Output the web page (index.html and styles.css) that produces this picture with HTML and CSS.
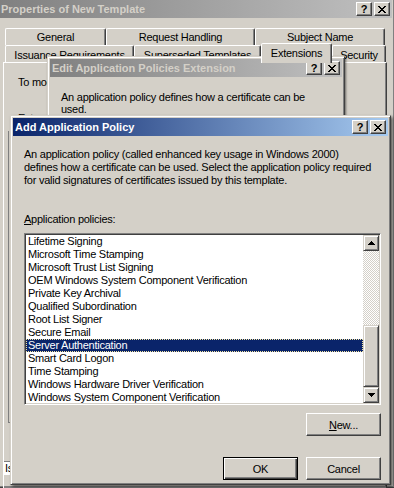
FILE: index.html
```html
<!DOCTYPE html>
<html lang="en">
<head>
    <meta charset="UTF-8">
    <meta name="viewport" content="width=device-width, initial-scale=1.0">
    <title>Add Application Policy</title>
    <link rel="stylesheet" href="styles.css">
</head>
<body>
    <!-- back window: certificate template properties -->
    <div class="window props">
        <div class="titlebar inactive">
            <span class="title">Properties of New Template</span>
            <div class="caption-btns">
                <button class="cbtn">?</button>
                <button class="cbtn"><svg width="8" height="7" viewBox="0 0 8 7"><path d="M0 0h2v1H0zM6 0h2v1H6zM1 1h2v1H1zM5 1h2v1H5zM2 2h4v1H2zM3 3h2v1H3zM2 4h4v1H2zM1 5h2v1H1zM5 5h2v1H5zM0 6h2v1H0zM6 6h2v1H6z"/></svg></button>
            </div>
        </div>
        <div class="tab-area">
            <div class="tab-row">
                <div class="tab" style="width:101px">General</div>
                <div class="tab" style="width:149px">Request Handling</div>
                <div class="tab" style="width:130px">Subject Name</div>
            </div>
            <div class="tab-row front">
                <div class="tab" style="width:129px">Issuance Requirements</div>
                <div class="tab" style="width:127px">Superseded Templates</div>
                <div class="tab selected" style="width:71px">Extensions</div>
                <div class="tab" style="width:54px">Security</div>
            </div>
        </div>
        <div class="tab-panel">
            <p class="panel-text">To modify an extension, select it, and then click Edit.</p>
            <p class="panel-text second">Extensions included in this template:</p>
            <div class="ext-list"></div>
            <div class="ext-desc">Issuance Policies</div>
        </div>
    </div>

    <!-- middle window -->
    <div class="window edit-ext">
        <div class="titlebar inactive">
            <span class="title">Edit Application Policies Extension</span>
            <div class="caption-btns">
                <button class="cbtn">?</button>
                <button class="cbtn"><svg width="8" height="7" viewBox="0 0 8 7"><path d="M0 0h2v1H0zM6 0h2v1H6zM1 1h2v1H1zM5 1h2v1H5zM2 2h4v1H2zM3 3h2v1H3zM2 4h4v1H2zM1 5h2v1H1zM5 5h2v1H5zM0 6h2v1H0zM6 6h2v1H6z"/></svg></button>
            </div>
        </div>
        <div class="edit-body">
            <p class="edit-text">An application policy defines how a certificate can be used.</p>
        </div>
    </div>

    <!-- front dialog -->
    <div class="window add-policy">
        <div class="titlebar active">
            <span class="title">Add Application Policy</span>
            <div class="caption-btns">
                <button class="cbtn">?</button>
                <button class="cbtn"><svg width="8" height="7" viewBox="0 0 8 7"><path d="M0 0h2v1H0zM6 0h2v1H6zM1 1h2v1H1zM5 1h2v1H5zM2 2h4v1H2zM3 3h2v1H3zM2 4h4v1H2zM1 5h2v1H1zM5 5h2v1H5zM0 6h2v1H0zM6 6h2v1H6z"/></svg></button>
            </div>
        </div>
        <div class="add-body">
            <p class="intro">An application policy (called enhanced key usage in Windows 2000)<br>defines how a certificate can be used. Select the application policy required<br>for valid signatures of certificates issued by this template.</p>
            <p class="field-label"><u>A</u>pplication policies:</p>
            <div class="listbox">
                <ul class="list-items">
                    <li>Lifetime Signing</li>
                    <li>Microsoft Time Stamping</li>
                    <li>Microsoft Trust List Signing</li>
                    <li>OEM Windows System Component Verification</li>
                    <li>Private Key Archival</li>
                    <li>Qualified Subordination</li>
                    <li>Root List Signer</li>
                    <li>Secure Email</li>
                    <li class="selected">Server Authentication</li>
                    <li>Smart Card Logon</li>
                    <li>Time Stamping</li>
                    <li>Windows Hardware Driver Verification</li>
                    <li>Windows System Component Verification</li>
                </ul>
                <div class="scrollbar">
                    <div class="sb-btn"><svg width="7" height="4" viewBox="0 0 7 4"><path d="M3 0h1v1H3zM2 1h3v1H2zM1 2h5v1H1zM0 3h7v1H0z"/></svg></div>
                    <div class="sb-track"></div>
                    <div class="sb-thumb"></div>
                    <div class="sb-btn"><svg width="7" height="4" viewBox="0 0 7 4"><path d="M0 0h7v1H0zM1 1h5v1H1zM2 2h3v1H2zM3 3h1v1H3z"/></svg></div>
                </div>
            </div>
            <div class="btn-row new-row">
                <button class="btn"><u>N</u>ew...</button>
            </div>
            <div class="btn-row action-row">
                <button class="btn default">OK</button>
                <button class="btn">Cancel</button>
            </div>
        </div>
    </div>
</body>
</html>
```

FILE: styles.css
```css
/* Windows 2000 dialog look */
* {
    box-sizing: border-box;
}
body {
    margin: 0;
    width: 394px;
    height: 488px;
    overflow: hidden;
    position: relative;
    background-color: #d4d0c8;
    font-family: "Liberation Sans", Arial, sans-serif;
    font-size: 11px;
    letter-spacing: -0.25px;
    color: #000;
}
p {
    margin: 0;
}
.window {
    position: absolute;
    display: flex;
    flex-direction: column;
    background-color: #d4d0c8;
    border: 1px solid;
    border-color: #d4d0c8 #404040 #404040 #d4d0c8;
    box-shadow: inset 1px 1px #fff, inset -1px -1px #808080;
    padding: 2px;
}
.props {
    left: -4px;
    top: -3px;
    width: 399px;
    height: 491px;
}
.edit-ext {
    left: 47px;
    top: 56px;
    width: 298px;
    height: 420px;
    box-shadow: inset 1px 1px #fff, inset -1px -1px #808080, 1px 1px 2px rgba(0,0,0,0.5);
}
.add-policy {
    left: 10px;
    top: 115px;
    width: 381px;
    height: 370px;
    box-shadow: inset 1px 1px #fff, inset -1px -1px #808080, 2px 2px 3px rgba(0,0,0,0.55);
}

/* title bars */
.titlebar {
    flex: none;
    height: 18px;
    display: flex;
    align-items: center;
    justify-content: space-between;
    padding: 0 2px;
    font-weight: bold;
    letter-spacing: 0;
    white-space: nowrap;
    overflow: hidden;
}
.titlebar.active {
    background: linear-gradient(to right, #0a246a, #a6caf0);
    color: #fff;
}
.titlebar.inactive {
    background: linear-gradient(to right, #808080, #c0c0c0);
    color: #d4d0c8;
}
.caption-btns {
    display: flex;
    gap: 2px;
}
.cbtn {
    width: 16px;
    height: 14px;
    padding: 0;
    display: flex;
    align-items: center;
    justify-content: center;
    background-color: #d4d0c8;
    border: 1px solid;
    border-color: #fff #404040 #404040 #fff;
    box-shadow: inset -1px -1px #808080;
    font-family: "Liberation Sans", Arial, sans-serif;
    font-size: 11px;
    font-weight: bold;
    color: #000;
    line-height: 1;
}

/* tabs */
.tab-area {
    padding: 10px 0 0 6px;
}
.tab-row {
    display: flex;
    height: 17px;
}
.tab {
    height: 17px;
    border: 1px solid;
    border-bottom: none;
    border-color: #fff #404040 transparent #fff;
    border-radius: 2px 2px 0 0;
    box-shadow: inset -1px 0 #808080;
    text-align: center;
    line-height: 17px;
    white-space: nowrap;
}
.tab-row.front .tab {
    line-height: 18px;
}
.tab-row.front .tab.selected {
    position: relative;
    z-index: 1;
    height: 20px;
    margin-top: -2px;
    line-height: 19px;
    background-color: #d4d0c8;
}
.tab-panel {
    flex: 1;
    width: 384px;
    margin-left: 4px;
    border: 1px solid;
    border-color: #fff #404040 #404040 #fff;
    box-shadow: inset -1px -1px #808080;
    padding: 13px 14px;
}
.panel-text {
    line-height: 13px;
    white-space: nowrap;
}
.panel-text.second {
    margin-top: 23px;
}
.ext-list {
    margin: 6px 0 0 -10px;
    height: 292px;
    border-left: 1px solid #808080;
    border-bottom: 1px solid #808080;
}
.ext-desc {
    margin: 38px 0 0 -14px;
    height: 14px;
    width: 200px;
    white-space: nowrap;
    background-color: #fff;
    border-top: 1px solid #808080;
    line-height: 12px;
    padding-left: 1px;
}

/* middle window */
.edit-body {
    padding: 14px 11px;
}
.edit-text {
    width: 262px;
    line-height: 12px;
}

/* front dialog */
.add-body {
    flex: 1;
    display: flex;
    flex-direction: column;
    padding: 12px 7px 2px 11px;
}
.intro {
    line-height: 13px;
    white-space: nowrap;
}
.field-label {
    margin-top: 26px;
    line-height: 13px;
}
.listbox {
    display: flex;
    height: 172px;
    margin-top: 7px;
    background-color: #fff;
    border: 1px solid;
    border-color: #808080 #fff #fff #808080;
    box-shadow: inset 1px 1px #404040, inset -1px -1px #d4d0c8;
    padding: 1px;
}
.list-items {
    flex: 1;
    list-style: none;
    margin: 0;
    padding: 0;
    overflow: hidden;
}
.list-items li {
    height: 13px;
    line-height: 13px;
    padding-left: 2px;
    white-space: nowrap;
}
.list-items li.selected {
    background-color: #0a246a;
    color: #fff;
    outline: 1px dotted #f3e4a0;
    outline-offset: -1px;
}
.scrollbar {
    width: 16px;
    display: flex;
    flex-direction: column;
}
.sb-btn, .sb-thumb {
    background-color: #d4d0c8;
    border: 1px solid;
    border-color: #d4d0c8 #404040 #404040 #d4d0c8;
    box-shadow: inset 1px 1px #fff, inset -1px -1px #808080;
}
.sb-btn {
    height: 16px;
    display: flex;
    align-items: center;
    justify-content: center;
}
.sb-track {
    flex: 1;
    background: repeating-conic-gradient(#fff 0 25%, #d4d0c8 0 50%) 0 0 / 2px 2px;
}
.sb-thumb {
    height: 62px;
}
.btn-row {
    display: flex;
    justify-content: flex-end;
    gap: 8px;
}
.new-row {
    margin-top: 8px;
}
.action-row {
    margin-top: 21px;
}
.btn {
    width: 75px;
    height: 23px;
    padding: 0;
    background-color: #d4d0c8;
    border: 1px solid;
    border-color: #fff #404040 #404040 #fff;
    box-shadow: inset -1px -1px #808080;
    font-family: "Liberation Sans", Arial, sans-serif;
    font-size: 11px;
    letter-spacing: -0.25px;
    color: #000;
}
.btn.default {
    border-color: #000;
    box-shadow: inset 1px 1px #fff, inset -1px -1px #404040, inset -2px -2px #808080;
}
```
